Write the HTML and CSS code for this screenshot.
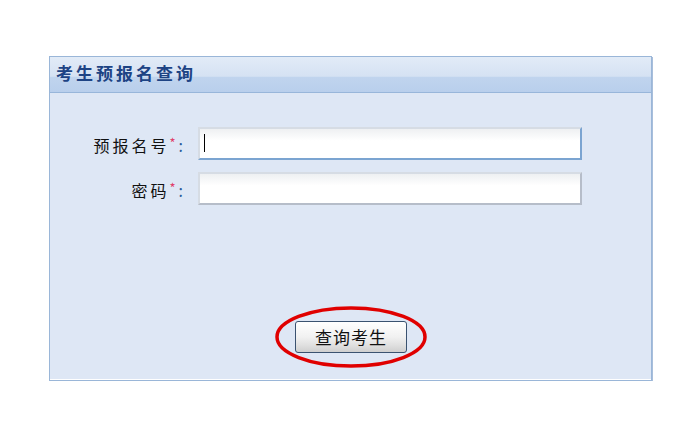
FILE: index.html
```html
<!DOCTYPE html>
<html lang="zh-CN">
<head>
    <meta charset="UTF-8">
    <title>考生预报名查询</title>
    <link rel="stylesheet" href="styles.css">
</head>
<body>
    <div class="panel">
        <div class="panel-header">
            <h2>考生预报名查询</h2>
        </div>
        <form class="panel-body">
            <div class="row">
                <label for="bmh">预报名号<span class="req">*</span><span class="colon">:</span></label>
                <div class="field">
                    <input type="text" id="bmh" class="focus" autofocus>
                    <span class="caret"></span>
                </div>
            </div>
            <div class="row">
                <label for="mm">密码<span class="req">*</span><span class="colon">:</span></label>
                <div class="field">
                    <input type="password" id="mm">
                </div>
            </div>
            <div class="actions">
                <span class="btn-wrap">
                    <button type="button">查询考生</button>
                    <svg class="circle" width="156" height="66" viewBox="0 0 156 66">
                        <ellipse cx="77" cy="32" rx="74" ry="29" fill="none" stroke="#e00000" stroke-width="3.5"/>
                    </svg>
                </span>
            </div>
        </form>
    </div>
</body>
</html>
```

FILE: styles.css
```css
body {
    margin: 0;
    padding: 0;
    background: #ffffff;
    font-family: "Noto Sans CJK SC", "Liberation Sans", sans-serif;
}

.panel {
    width: 601px;
    margin: 56px 0 0 49px;
    border: 1px solid #9ab6d8;
    box-shadow: 1px 1px 0 #a8bedb;
    background: #dee7f5;
}

.panel-header {
    height: 35px;
    border-bottom: 1px solid #98b6da;
    background: linear-gradient(to bottom, #e2ebf7 0%, #d5e2f3 55%, #c0d4ee 58%, #b9cfec 100%);
}

.panel-header h2 {
    margin: 0;
    padding: 5px 0 0 6px;
    font-size: 17px;
    line-height: 22px;
    font-weight: bold;
    color: #1d4384;
    letter-spacing: 3px;
}

.panel-body {
    padding: 34px 0 26px 0;
    border-bottom: 1px solid #ffffff;
}

.row {
    display: flex;
    align-items: center;
    height: 33px;
    margin-bottom: 12px;
}

.row label {
    width: 133px;
    text-align: right;
    font-size: 16px;
    letter-spacing: 3px;
    color: #111111;
    padding-top: 2px;
}

.req {
    color: #e0406a;
    font-size: 13px;
    letter-spacing: 0;
    vertical-align: 4px;
}

.colon {
    color: #2a5c9a;
    letter-spacing: 0;
    margin-left: 3px;
}

.field {
    position: relative;
    margin-left: 15px;
}

.field input {
    display: block;
    box-sizing: border-box;
    width: 384px;
    height: 33px;
    padding: 0 6px;
    font-size: 15px;
    border: 2px solid #b6bdc9;
    border-top: 2px solid #d6dce4;
    border-left: 2px solid #d6dce4;
    background: linear-gradient(to bottom, #eef0f2 0%, #ffffff 40%);
    outline: none;
}

.field input.focus {
    border-right-color: #7ba4d1;
    border-bottom-color: #7ba4d1;
}

.caret {
    position: absolute;
    left: 6px;
    top: 7px;
    width: 1px;
    height: 18px;
    background: #000000;
}

.actions {
    display: flex;
    justify-content: center;
    padding-top: 104px;
}

.btn-wrap {
    position: relative;
    display: inline-block;
    margin-left: 1px;
}

.btn-wrap button {
    width: 112px;
    height: 32px;
    font-family: "Noto Sans CJK SC", sans-serif;
    font-size: 17px;
    letter-spacing: 1px;
    color: #111111;
    border: 1px solid #3a5270;
    border-radius: 3px;
    background: linear-gradient(to bottom, #ffffff 0%, #f1f1f1 50%, #dedede 80%, #cfcfcf 100%);
    padding: 0 0 2px 0;
    cursor: pointer;
}

.circle {
    position: absolute;
    left: -21px;
    top: -16px;
    pointer-events: none;
}
```
